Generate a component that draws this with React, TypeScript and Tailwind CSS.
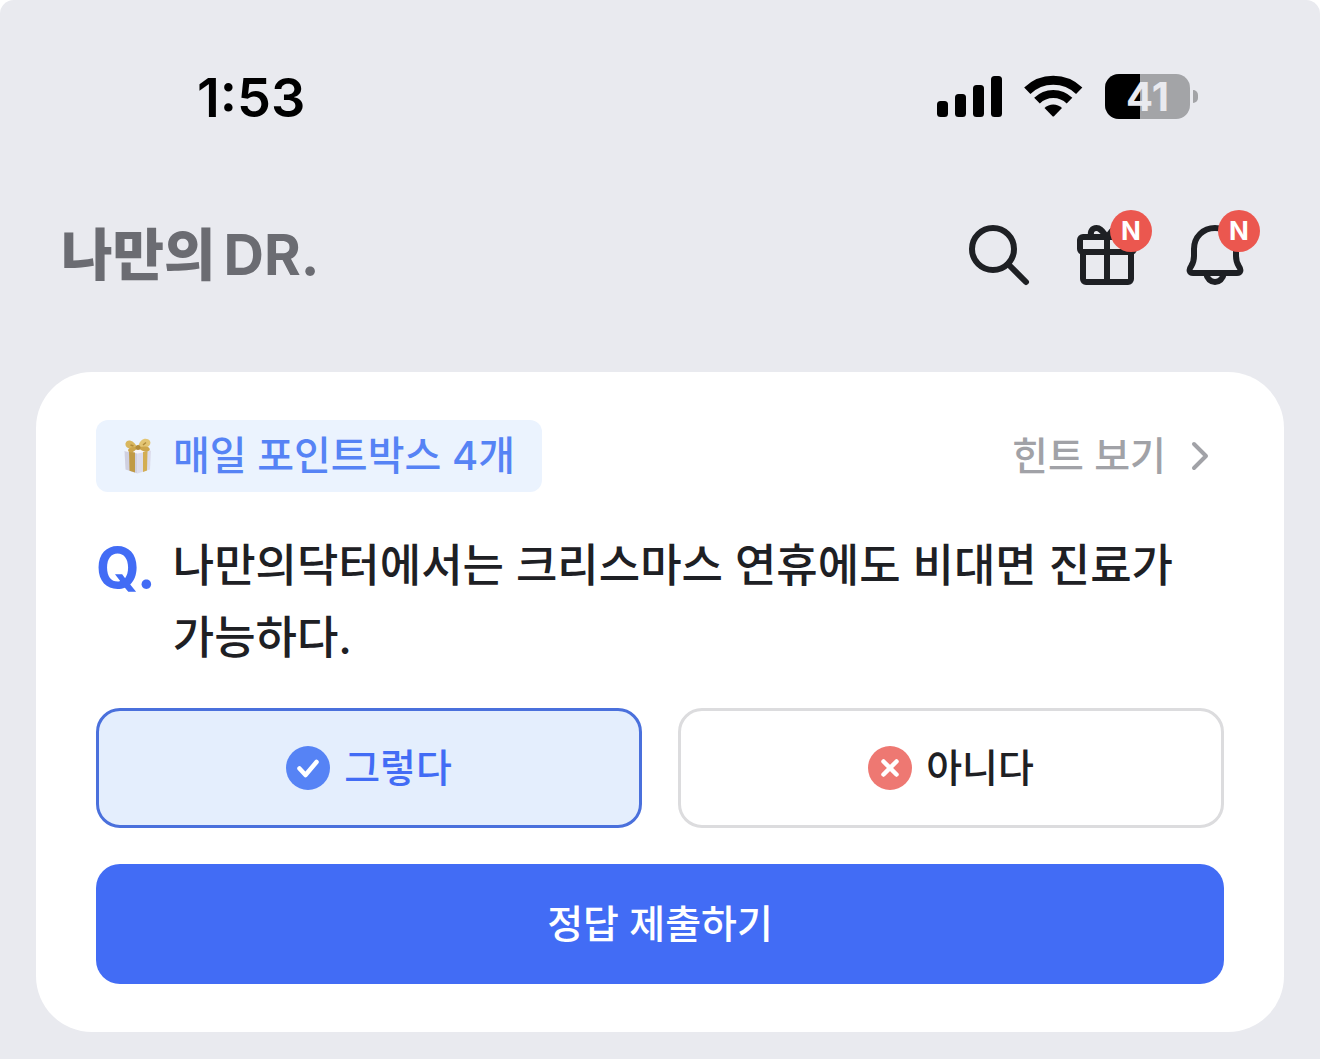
import { useState } from 'react';

const ANSWERS = [
  { id: 'yes', label: '그렇다', badge: 'bg-[#5683f5]', icon: 'M13.5 22.500l6 6.500 11-13' },
  { id: 'no', label: '아니다', badge: 'bg-[#ee7872]', icon: 'M15.500 15.500l13 13M28.500 15.500l-13 13' },
];

function SignalIcon() {
  return (
    <svg width="65" height="45" viewBox="0 0 65 45" aria-hidden="true">
      <rect x="0" y="27" width="11" height="16" rx="3.500" />
      <rect x="18" y="20" width="11" height="23" rx="3.500" />
      <rect x="36" y="11" width="11" height="32" rx="3.500" />
      <rect x="54" y="2" width="11" height="41" rx="3.500" />
    </svg>
  );
}

function WifiIcon() {
  return (
    <svg width="59" height="45" viewBox="0 0 59 45" fill="none" stroke="#000" aria-hidden="true">
      <path d="M3.300 16.800A37.300 37.300 0 0 1 55.200 16.800" strokeWidth="9" />
      <path d="M13 26.700A23 23 0 0 1 45.500 26.700" strokeWidth="8" />
      <path d="M20.500 34A12.600 12.600 0 0 1 38 34L30 42.200Q29.250 42.800 28.500 42.200Z" fill="#000" stroke="none" />
    </svg>
  );
}

function Battery({ level }: { level: number }) {
  return (
    <div className="flex items-center gap-[3px]">
      <div className="relative flex h-[45px] w-[85px] items-center justify-center rounded-[14px] bg-[#a3a4a7]">
        <div className="absolute inset-y-0 left-0 rounded-l-[14px] bg-black" style={{ width: `${level}%` }} />
        <span className="relative text-[40px] leading-[45px] font-bold text-[#e9eaef]">{level}</span>
      </div>
      <div className="h-[13px] w-[5px] rounded-r-full bg-[#a3a4a7]" />
    </div>
  );
}

function SearchIcon() {
  return (
    <svg width="72" height="72" viewBox="0 0 72 72" fill="none" stroke="#1e2024" strokeWidth="6" strokeLinecap="round" aria-hidden="true">
      <circle cx="30" cy="30" r="21" />
      <path d="M45 45l18 18" />
    </svg>
  );
}

function GiftIcon() {
  return (
    <svg width="72" height="72" viewBox="0 0 72 72" fill="none" stroke="#1e2024" strokeWidth="6" strokeLinejoin="round" aria-hidden="true">
      <rect x="9" y="18" width="54" height="15" rx="3" />
      <path d="M12 33v27a3 3 0 0 0 3 3h42a3 3 0 0 0 3-3V33M36 18v45" />
      <path d="M20.500 17.500C18.500 12.500 21.500 9 25.500 9C29.500 9 31 12 36 18C41 12 42.500 9 46.500 9C50.500 9 53.500 12.500 51.500 17.500" />
    </svg>
  );
}

function BellIcon() {
  return (
    <svg width="72" height="72" viewBox="0 0 72 72" fill="none" stroke="#1e2024" strokeWidth="6" strokeLinejoin="round" aria-hidden="true">
      <path d="M36 9C24 9 15 18 15 30V37C15 42 14 44.500 12 47.500C9.500 51 10.500 54 14 54H58C61.500 54 62.500 51 60 47.500C58 44.500 57 42 57 37V30C57 18 48 9 36 9Z" />
      <path d="M27 54C28 60 32 63 36 63C40 63 44 60 45 54" />
    </svg>
  );
}

function NewBadge() {
  return (
    <span className="absolute -top-[9px] -right-[9px] flex size-[42px] items-center justify-center rounded-full bg-[#eb574f] text-[26px] leading-none font-bold text-white">
      N
    </span>
  );
}

function PointBoxIcon() {
  return (
    <svg width="36" height="36" viewBox="0 0 36 36" aria-hidden="true">
      <path d="M4.500 13l13 2v20.500L5.500 31.500z" fill="#d0d0e0" />
      <path d="M17.500 15l13.500-2.500-1 19-12.500 4z" fill="#dcdcec" />
      <path d="M4.500 13l12-3 14.500 2.500-13.500 3z" fill="#f7f6fb" />
      <path d="M9 13.500l6 1v20l-5.500-1.800z" fill="#c09a45" />
      <path d="M23 14l4.500-1-.5 19.500-4 1.500z" fill="#d3ad52" />
      <path d="M17 9C13 1 6.500 1 5.500 5.500C5 10 9 11 17 11z" fill="#d9b75e" />
      <path d="M18 9C20 0 27-1 30 3C32 8 26 11 18 11z" fill="#e3c573" />
      <path d="M16 9C10 9 7 11 8.500 13.500C12 16 15 13 17 10zM20 9C26 7.500 31 9 29.500 12.500C26 15 21 13 19 10z" fill="#cda64c" />
      <path d="M10.500 7l3 1M23 7l3-2.500" stroke="#b08b3c" strokeWidth="1.500" />
      <circle cx="18" cy="9.500" r="2.500" fill="#b28c3a" />
    </svg>
  );
}

export default function App() {
  const [answer, setAnswer] = useState('yes');

  return (
    <div className="bg-white font-['Inter','Noto_Sans_CJK_KR',sans-serif] text-[#1e2024]">
      <div className="min-h-screen rounded-t-[14px] bg-[#e9eaef] pt-[60px] pb-7">
        {/* 상태 표시줄 */}
        <div className="flex items-start justify-between pr-[122px] pl-[197px] text-black">
          <time className="text-[54px] leading-[76px] font-semibold">1:53</time>
          <div className="flex h-[73px] items-center gap-[22px]">
            <SignalIcon />
            <WifiIcon />
            <Battery level={41} />
          </div>
        </div>

        {/* 헤더 */}
        <header className="mt-[83px] flex h-[72px] items-center justify-between pr-[69px] pl-[61px]">
          <a href="#" className="flex items-center gap-2 text-[56px] leading-[72px] text-[#6b6c72]">
            <span className="font-black">나만의</span>
            <span className="font-bold">DR.</span>
          </a>
          <nav className="flex gap-9">
            <button type="button" aria-label="검색">
              <SearchIcon />
            </button>
            <button type="button" aria-label="선물" className="relative">
              <GiftIcon />
              <NewBadge />
            </button>
            <button type="button" aria-label="알림" className="relative">
              <BellIcon />
              <NewBadge />
            </button>
          </nav>
        </header>

        {/* 퀴즈 카드 */}
        <main className="mx-9 mt-[81px] flex flex-col rounded-[56px] bg-white px-[60px] py-12 font-medium">
          <div className="flex items-center justify-between">
            <div className="flex h-[72px] items-center gap-[17px] rounded-xl bg-[#ebf3fe] pr-[27px] pl-6 text-[40px] text-[#5683f5]">
              <PointBoxIcon />
              매일 포인트박스 4개
            </div>
            <button type="button" className="flex h-[72px] items-center gap-4 pr-1.5 text-[39px] text-[#a1a2a7]">
              힌트 보기
              <svg width="36" height="36" viewBox="0 0 36 36" fill="none" stroke="#a1a2a7" strokeWidth="4" strokeLinecap="round" strokeLinejoin="round" aria-hidden="true">
                <path d="M12 6L24 18L12 30" />
              </svg>
            </button>
          </div>

          <div className="mt-[38px] flex gap-[17px]">
            <span className="text-[56px] leading-[76px] font-bold text-[#426cf5]">Q.</span>
            <p className="text-[45px] leading-[72px] break-keep">
              나만의닥터에서는 크리스마스 연휴에도 비대면 진료가 가능하다.
            </p>
          </div>

          <div className="mt-[34px] grid grid-cols-2 gap-9">
            {ANSWERS.map(item => (
              <button
                key={item.id}
                type="button"
                aria-pressed={answer === item.id}
                onClick={() => setAnswer(item.id)}
                className={`flex h-[120px] items-center justify-center gap-[14px] rounded-3xl border-3 text-[39px] ${
                  answer === item.id
                    ? 'border-[#4a70dc] bg-[#e4eefd] text-[#426cf5]'
                    : 'border-[#dcdcde] bg-white text-[#1e2024]'
                }`}
              >
                <span className={`size-11 rounded-full ${item.badge}`}>
                  <svg width="44" height="44" viewBox="0 0 44 44" fill="none" stroke="#fff" strokeWidth="4.500" strokeLinecap="round" strokeLinejoin="round" aria-hidden="true">
                    <path d={item.icon} />
                  </svg>
                </span>
                {item.label}
              </button>
            ))}
          </div>

          <button type="button" className="mt-9 h-[120px] rounded-3xl bg-[#426cf5] text-[39px] text-white">
            정답 제출하기
          </button>
        </main>
      </div>
    </div>
  );
}
